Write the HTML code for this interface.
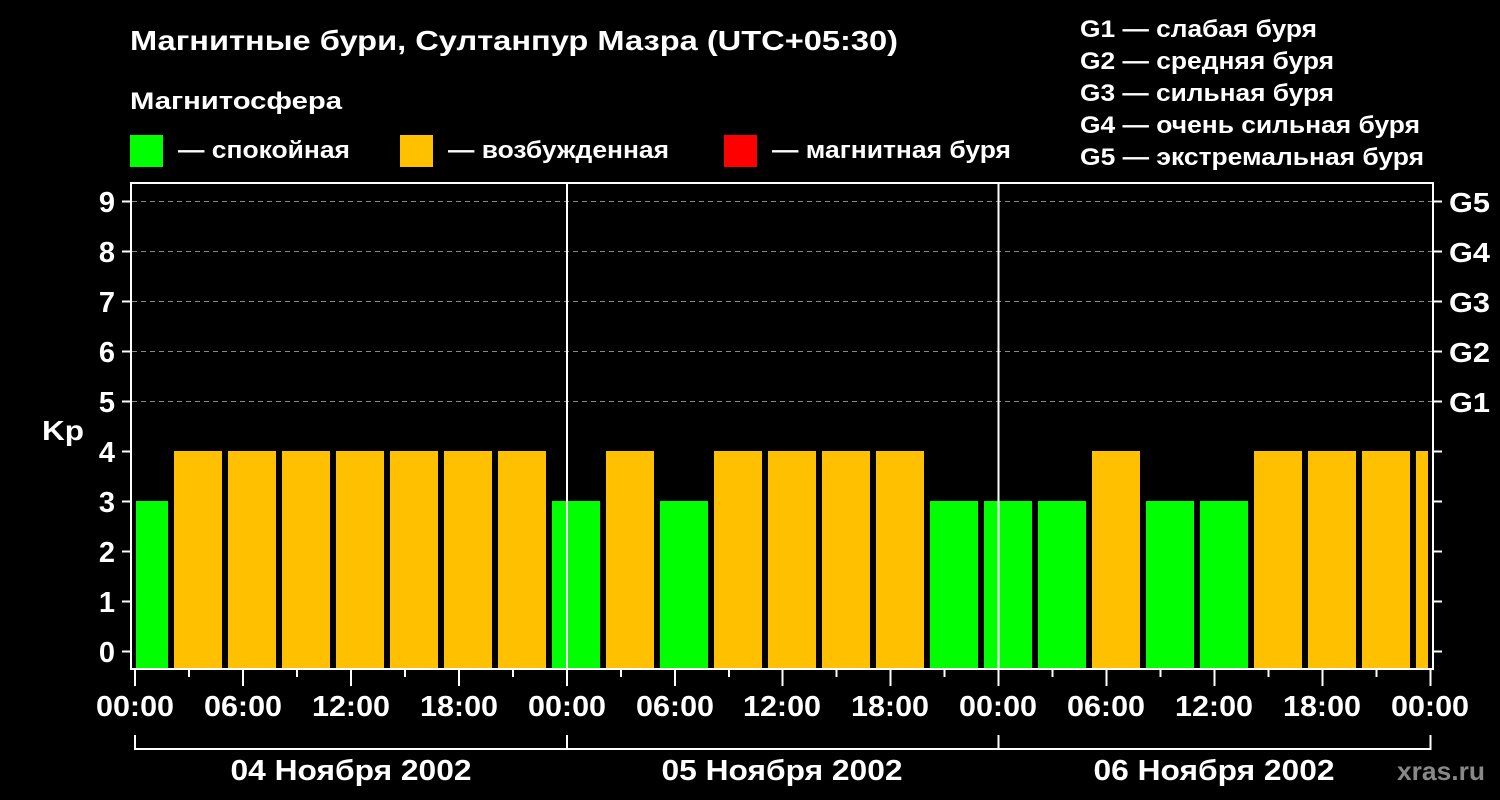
<!DOCTYPE html>
<html><head><meta charset="utf-8"><style>html,body{margin:0;background:#000;}svg{display:block}</style></head><body>
<svg width="1500" height="800" xmlns="http://www.w3.org/2000/svg" font-family="'Liberation Sans', sans-serif" font-weight="bold" fill="#fff">
<rect width="1500" height="800" fill="#000"/>
<text x="130" y="50" font-size="28" textLength="768" lengthAdjust="spacingAndGlyphs">Магнитные бури, Султанпур Мазра (UTC+05:30)</text>
<text x="130" y="109" font-size="24" textLength="212" lengthAdjust="spacingAndGlyphs">Магнитосфера</text>
<rect x="130" y="135" width="33" height="32" fill="#00ff00"/>
<text x="178" y="158" font-size="24" textLength="172" lengthAdjust="spacingAndGlyphs">— спокойная</text>
<rect x="400" y="135" width="33" height="32" fill="#ffc000"/>
<text x="448" y="158" font-size="24" textLength="221" lengthAdjust="spacingAndGlyphs">— возбужденная</text>
<rect x="724" y="135" width="33" height="32" fill="#ff0000"/>
<text x="772" y="158" font-size="24" textLength="239" lengthAdjust="spacingAndGlyphs">— магнитная буря</text>
<g font-size="24">
<text x="1080" y="37" textLength="237" lengthAdjust="spacingAndGlyphs">G1 — слабая буря</text>
<text x="1080" y="69" textLength="254" lengthAdjust="spacingAndGlyphs">G2 — средняя буря</text>
<text x="1080" y="101" textLength="254" lengthAdjust="spacingAndGlyphs">G3 — сильная буря</text>
<text x="1080" y="133" textLength="340" lengthAdjust="spacingAndGlyphs">G4 — очень сильная буря</text>
<text x="1080" y="165" textLength="344" lengthAdjust="spacingAndGlyphs">G5 — экстремальная буря</text>
</g>
<g stroke="#888" stroke-width="1" stroke-dasharray="5,4">
<line x1="132" y1="201.5" x2="1432" y2="201.5"/>
<line x1="132" y1="251.5" x2="1432" y2="251.5"/>
<line x1="132" y1="301.5" x2="1432" y2="301.5"/>
<line x1="132" y1="351.5" x2="1432" y2="351.5"/>
<line x1="132" y1="401.5" x2="1432" y2="401.5"/>
</g>
<g>
<rect x="136" y="501" width="32" height="167" fill="#00ff00"/>
<rect x="174" y="451" width="48" height="217" fill="#ffc000"/>
<rect x="228" y="451" width="48" height="217" fill="#ffc000"/>
<rect x="282" y="451" width="48" height="217" fill="#ffc000"/>
<rect x="336" y="451" width="48" height="217" fill="#ffc000"/>
<rect x="390" y="451" width="48" height="217" fill="#ffc000"/>
<rect x="444" y="451" width="48" height="217" fill="#ffc000"/>
<rect x="498" y="451" width="48" height="217" fill="#ffc000"/>
<rect x="552" y="501" width="48" height="167" fill="#00ff00"/>
<rect x="606" y="451" width="48" height="217" fill="#ffc000"/>
<rect x="660" y="501" width="48" height="167" fill="#00ff00"/>
<rect x="714" y="451" width="48" height="217" fill="#ffc000"/>
<rect x="768" y="451" width="48" height="217" fill="#ffc000"/>
<rect x="822" y="451" width="48" height="217" fill="#ffc000"/>
<rect x="876" y="451" width="48" height="217" fill="#ffc000"/>
<rect x="930" y="501" width="48" height="167" fill="#00ff00"/>
<rect x="984" y="501" width="48" height="167" fill="#00ff00"/>
<rect x="1038" y="501" width="48" height="167" fill="#00ff00"/>
<rect x="1092" y="451" width="48" height="217" fill="#ffc000"/>
<rect x="1146" y="501" width="48" height="167" fill="#00ff00"/>
<rect x="1200" y="501" width="48" height="167" fill="#00ff00"/>
<rect x="1254" y="451" width="48" height="217" fill="#ffc000"/>
<rect x="1308" y="451" width="48" height="217" fill="#ffc000"/>
<rect x="1362" y="451" width="48" height="217" fill="#ffc000"/>
<rect x="1416" y="451" width="12" height="217" fill="#ffc000"/>
</g>
<g stroke="#fff" stroke-width="2" fill="none">
<rect x="131" y="183" width="1302" height="486"/>
<line x1="567" y1="183" x2="567" y2="669"/>
<line x1="998.5" y1="183" x2="998.5" y2="669"/>
<path d="M122 201.5h9M122 251.5h9M122 301.5h9M122 351.5h9M122 401.5h9M122 451.5h9M122 501.5h9M122 551.5h9M122 601.5h9M122 651.5h9"/>
<path d="M1433 201.5h9M1433 251.5h9M1433 301.5h9M1433 351.5h9M1433 401.5h9M1433 451.5h9M1433 501.5h9M1433 551.5h9M1433 601.5h9M1433 651.5h9"/>
<path d="M135 669v17M243 669v17M351 669v17M459 669v17M567 669v17M675 669v17M782.5 669v17M890.5 669v17M998.5 669v17M1106.5 669v17M1214.5 669v17M1322.5 669v17M1430.5 669v17"/>
<path d="M189 669v8M297 669v8M405 669v8M513 669v8M621 669v8M729 669v8M836.5 669v8M944.5 669v8M1052.5 669v8M1160.5 669v8M1268.5 669v8M1376.5 669v8"/>
<path d="M135 735v14H1430.5V735M567 735v14M998.5 735v14"/>
</g>
<g font-size="29" text-anchor="end">
<text x="115" y="212">9</text><text x="115" y="262">8</text><text x="115" y="312">7</text><text x="115" y="362">6</text><text x="115" y="412">5</text><text x="115" y="462">4</text><text x="115" y="512">3</text><text x="115" y="562">2</text><text x="115" y="612">1</text><text x="115" y="662">0</text>
</g>
<text x="42" y="440" font-size="28" textLength="42" lengthAdjust="spacingAndGlyphs">Kp</text>
<g font-size="28">
<text x="1449" y="212" textLength="41" lengthAdjust="spacingAndGlyphs">G5</text><text x="1449" y="262" textLength="41" lengthAdjust="spacingAndGlyphs">G4</text><text x="1449" y="312" textLength="41" lengthAdjust="spacingAndGlyphs">G3</text><text x="1449" y="362" textLength="41" lengthAdjust="spacingAndGlyphs">G2</text><text x="1449" y="412" textLength="41" lengthAdjust="spacingAndGlyphs">G1</text>
</g>
<g font-size="29" text-anchor="middle">
<text x="135" y="716" textLength="78" lengthAdjust="spacingAndGlyphs">00:00</text><text x="243" y="716" textLength="78" lengthAdjust="spacingAndGlyphs">06:00</text><text x="351" y="716" textLength="78" lengthAdjust="spacingAndGlyphs">12:00</text><text x="459" y="716" textLength="78" lengthAdjust="spacingAndGlyphs">18:00</text>
<text x="567" y="716" textLength="78" lengthAdjust="spacingAndGlyphs">00:00</text><text x="675" y="716" textLength="78" lengthAdjust="spacingAndGlyphs">06:00</text><text x="782" y="716" textLength="78" lengthAdjust="spacingAndGlyphs">12:00</text><text x="890" y="716" textLength="78" lengthAdjust="spacingAndGlyphs">18:00</text>
<text x="998" y="716" textLength="78" lengthAdjust="spacingAndGlyphs">00:00</text><text x="1106" y="716" textLength="78" lengthAdjust="spacingAndGlyphs">06:00</text><text x="1214" y="716" textLength="78" lengthAdjust="spacingAndGlyphs">12:00</text><text x="1322" y="716" textLength="78" lengthAdjust="spacingAndGlyphs">18:00</text>
<text x="1430" y="716" textLength="78" lengthAdjust="spacingAndGlyphs">00:00</text>
<text x="351" y="780" textLength="241" lengthAdjust="spacingAndGlyphs">04 Ноября 2002</text>
<text x="782" y="780" textLength="241" lengthAdjust="spacingAndGlyphs">05 Ноября 2002</text>
<text x="1214" y="780" textLength="241" lengthAdjust="spacingAndGlyphs">06 Ноября 2002</text>
</g>
<text x="1485" y="780" font-size="26" text-anchor="end" fill="#888" textLength="88" lengthAdjust="spacingAndGlyphs">xras.ru</text>
</svg>
</body></html>
